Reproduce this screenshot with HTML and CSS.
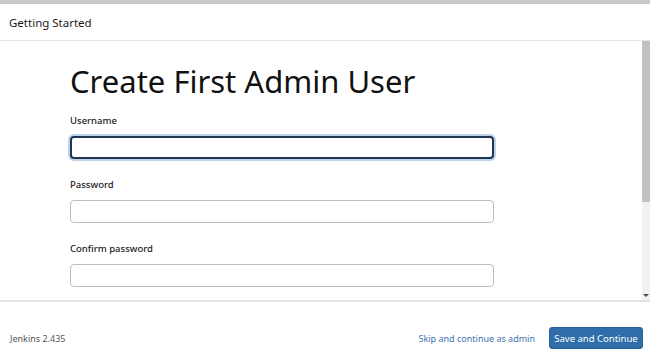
FILE: index.html
```html
<!DOCTYPE html>
<html lang="en">

<head>
  <meta charset="UTF-8" />
  <meta name="viewport" content="width=device-width, initial-scale=1.0" />
  <title>Getting Started</title>
  <link rel="stylesheet" href="styles.css">
</head>

<body>
  <div class="edge"></div>
  <div class="dialog">
    <div class="header">Getting Started</div>
    <div class="body">
      <div class="pane">
        <h1 class="title">Create First Admin User</h1>
        <form class="form">
          <label class="field">
            <span class="label">Username</span>
            <input class="input focused" type="text" />
          </label>
          <label class="field">
            <span class="label">Password</span>
            <input class="input" type="password" />
          </label>
          <label class="field">
            <span class="label">Confirm password</span>
            <input class="input" type="password" />
          </label>
        </form>
      </div>
      <div class="scrollbar">
        <div class="thumb"></div>
        <div class="arrow"></div>
      </div>
    </div>
    <div class="footer">
      <span class="version">Jenkins 2.435</span>
      <a class="skip" href="#">Skip and continue as admin</a>
      <button type="button" class="save">Save and Continue</button>
    </div>
  </div>
</body>

</html>
```

FILE: styles.css
```css
html, body {
  margin: 0;
  padding: 0;
  height: 355px;
  overflow: hidden;
  background: #fff;
  font-family: "Noto Sans", "Open Sans", sans-serif;
  color: #222;
}

.edge {
  height: 4px;
  background: #c9c9c9;
}

.dialog {
  display: flex;
  flex-direction: column;
}

.header {
  height: 36px;
  display: flex;
  align-items: center;
  padding-left: 9px;
  font-size: 11.5px;
  color: #1a1a1a;
  border-bottom: 1px solid #e6e6e6;
}

.body {
  display: flex;
  height: 259px;
}

.pane {
  flex: 1;
  padding-left: 70px;
  overflow: hidden;
}

.title {
  margin: 20px 0 0;
  font-size: 31px;
  font-weight: 400;
  line-height: 40px;
  color: #111;
}

.form {
  display: flex;
  flex-direction: column;
  gap: 20px;
  width: 424px;
  margin-top: 14px;
}

.field {
  display: flex;
  flex-direction: column;
  gap: 9px;
}

.label {
  font-size: 9.5px;
  font-weight: 500;
  line-height: 12px;
  color: #222;
}

.input {
  height: 23px;
  box-sizing: border-box;
  border: 1px solid #b9bec4;
  border-radius: 4px;
  padding: 0 6px;
  margin: 0;
  background: #fff;
  outline: none;
}

.input.focused {
  border: 2px solid #1f3550;
  box-shadow: 0 0 0 2px #bcd3ea;
}

.scrollbar {
  width: 8px;
  background: #f1f1f1;
  display: flex;
  flex-direction: column;
  justify-content: space-between;
  align-items: center;
}

.thumb {
  width: 8px;
  height: 161px;
  background: #c1c1c1;
}

.arrow {
  width: 0;
  height: 0;
  border-left: 3px solid transparent;
  border-right: 3px solid transparent;
  border-top: 3px solid #505050;
  margin-bottom: 3px;
}

.footer {
  display: flex;
  align-items: center;
  box-sizing: border-box;
  height: 62px;
  padding: 12px 7px 0 10px;
  border-top: 2px solid #e4e4e4;
}

.version {
  flex: 1;
  font-size: 9px;
  color: #555;
}

.skip {
  font-size: 9px;
  color: #3c74b0;
  text-decoration: none;
  margin-right: 14px;
}

.save {
  height: 22px;
  width: 94px;
  padding: 0;
  border: 1px solid #2a6299;
  border-radius: 3px;
  background: #2f6eaa;
  color: #fff;
  font-family: inherit;
  font-size: 9.5px;
}
```
